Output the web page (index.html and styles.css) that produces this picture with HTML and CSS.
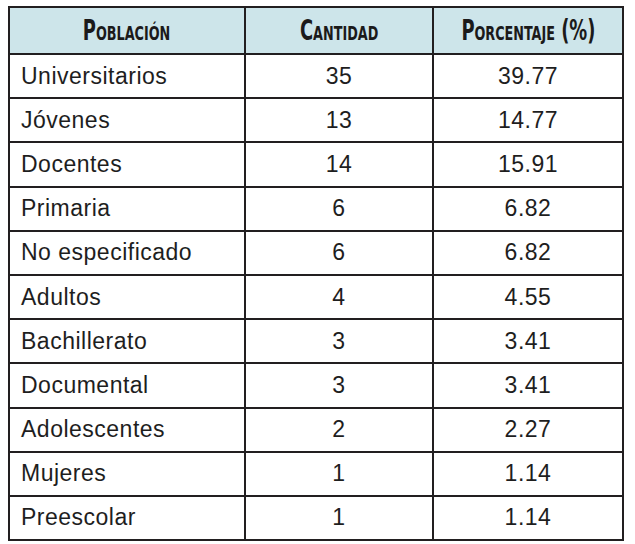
FILE: index.html
```html
<!DOCTYPE html>
<html lang="es">
<head>
<meta charset="utf-8">
<title>Población</title>
<link rel="stylesheet" href="styles.css">
</head>
<body>
<table class="data">
  <colgroup>
    <col class="c1"><col class="c2"><col class="c3">
  </colgroup>
  <thead>
    <tr>
      <th><span class="hd">Población</span></th>
      <th><span class="hd">Cantidad</span></th>
      <th><span class="hd">Porcentaje (%)</span></th>
    </tr>
  </thead>
  <tbody>
    <tr><td class="name">Universitarios</td><td>35</td><td>39.77</td></tr>
    <tr><td class="name">Jóvenes</td><td>13</td><td>14.77</td></tr>
    <tr><td class="name">Docentes</td><td>14</td><td>15.91</td></tr>
    <tr><td class="name">Primaria</td><td>6</td><td>6.82</td></tr>
    <tr><td class="name">No especificado</td><td>6</td><td>6.82</td></tr>
    <tr><td class="name">Adultos</td><td>4</td><td>4.55</td></tr>
    <tr><td class="name">Bachillerato</td><td>3</td><td>3.41</td></tr>
    <tr><td class="name">Documental</td><td>3</td><td>3.41</td></tr>
    <tr><td class="name">Adolescentes</td><td>2</td><td>2.27</td></tr>
    <tr><td class="name">Mujeres</td><td>1</td><td>1.14</td></tr>
    <tr><td class="name">Preescolar</td><td>1</td><td>1.14</td></tr>
  </tbody>
</table>
</body>
</html>
```
FILE: styles.css
```css
html, body {
  background: #ffffff;
}
body {
  margin: 6px 8px;
  font-family: "Liberation Sans", Arial, sans-serif;
  color: #1e1e1e;
}
.data {
  border-collapse: collapse;
  table-layout: fixed;
  width: 614px;
}
.c1 { width: 236px; }
.c2 { width: 188px; }
.c3 { width: 190px; }
.data th,
.data td {
  border: 2px solid #221f20;
  padding: 0;
}
.data th {
  background: #cde5ea;
  height: 45px;
  text-align: center;
  vertical-align: middle;
  white-space: nowrap;
  overflow: visible;
}
.hd {
  display: inline-block;
  font-family: "DejaVu Sans Condensed", "DejaVu Sans", sans-serif;
  font-weight: bold;
  font-variant: small-caps;
  font-size: 28px;
  line-height: 1;
  color: #1b1a1a;
  white-space: nowrap;
  transform: scaleX(0.71);
  margin: 0 -40px;
}
.data td {
  height: 42.2px;
  font-size: 23px;
  letter-spacing: 0.5px;
  text-align: center;
  vertical-align: middle;
  line-height: 1;
}
.data td.name {
  text-align: left;
  padding-left: 11px;
}
```
